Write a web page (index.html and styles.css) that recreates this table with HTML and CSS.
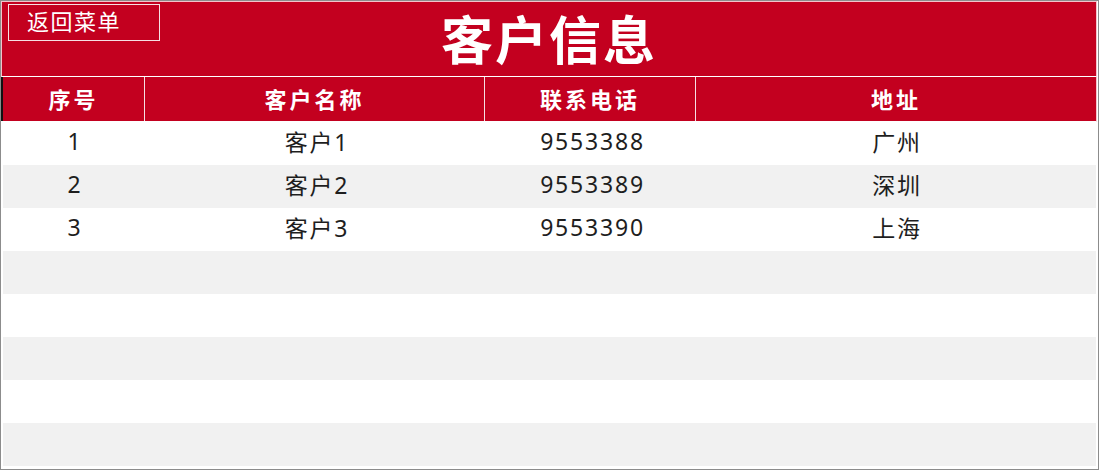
FILE: index.html
```html
<!DOCTYPE html>
<html lang="zh-CN">
<head>
<meta charset="utf-8">
<title>客户信息</title>
<link rel="stylesheet" href="styles.css">
</head>
<body>
<div class="window">
  <header class="banner">
    <button class="back-btn">返回菜单</button>
    <h1 class="title">客户信息</h1>
  </header>
  <div class="grid head">
    <div class="cell hc first">序号</div>
    <div class="cell hc">客户名称</div>
    <div class="cell hc">联系电话</div>
    <div class="cell hc last">地址</div>
  </div>
  <div class="rows">
    <div class="grid row">
      <div class="cell">1</div><div class="cell">客户1</div><div class="cell">9553388</div><div class="cell">广州</div>
    </div>
    <div class="grid row alt">
      <div class="cell">2</div><div class="cell">客户2</div><div class="cell">9553389</div><div class="cell">深圳</div>
    </div>
    <div class="grid row">
      <div class="cell">3</div><div class="cell">客户3</div><div class="cell">9553390</div><div class="cell">上海</div>
    </div>
    <div class="grid row alt"></div>
    <div class="grid row"></div>
    <div class="grid row alt"></div>
    <div class="grid row"></div>
    <div class="grid row alt"></div>
  </div>
</div>
</body>
</html>
```

FILE: styles.css
```css
* { box-sizing: border-box; }
html, body { margin: 0; padding: 0; background: #ffffff; }
body {
  font-family: "Noto Sans", "Noto Sans CJK SC", sans-serif;
  width: 1099px;
  height: 470px;
  overflow: hidden;
}
.window {
  width: 1099px;
  height: 470px;
  border: 1px solid #8c8c8c;
  background: #ffffff;
  display: flex;
  flex-direction: column;
  overflow: hidden;
}
.banner {
  position: relative;
  height: 76px;
  flex: none;
  background: #c3001f;
  border: 1px solid #f3c4cc;
  border-bottom: 1px solid #ffffff;
  margin-right: 1px;
  display: flex;
  align-items: center;
  justify-content: center;
}
.back-btn {
  position: absolute;
  left: 6px;
  top: 2px;
  width: 152px;
  height: 37px;
  background: transparent;
  border: 1px solid #f6dfe3;
  color: #ffffff;
  font-family: "Noto Sans CJK SC", sans-serif;
  font-size: 22px;
  letter-spacing: 1.5px;
  text-align: left;
  padding: 0 0 6px 18px;
  line-height: 1;
  cursor: pointer;
}
.title {
  margin: 0;
  color: #ffffff;
  font-family: "Noto Sans CJK SC", sans-serif;
  font-weight: 700;
  font-size: 52px;
  letter-spacing: 2px;
  line-height: 1;
  padding-bottom: 2px;
}
.grid {
  display: grid;
  grid-template-columns: 144px 340px 211px 1fr;
}
.head {
  height: 45px;
  flex: none;
  background: #c3001f;
  margin-right: 1px;
  border-right: 1px solid #f3c4cc;
  border-bottom: 1px solid #ffffff;
}
.hc {
  color: #ffffff;
  font-weight: 700;
  font-size: 22px;
  letter-spacing: 3px;
  border-right: 1px solid #f6dfe3;
  padding-bottom: 2px;
}
.hc.first { border-left: 2px solid #111111; }
.hc.last { border-right: none; }
.cell {
  display: flex;
  align-items: center;
  justify-content: center;
  font-family: "Noto Sans", "Noto Sans CJK SC", sans-serif;
}
.rows {
  flex: 1;
  display: flex;
  flex-direction: column;
}
.row {
  height: 43px;
  flex: none;
  margin: 0 2px;
  background: #ffffff;
}
.row.alt { background: #f1f1f1; }
.row .cell {
  color: #1e1e1e;
  font-size: 23px;
  letter-spacing: 1.8px;
  padding-bottom: 5px;
}
```
